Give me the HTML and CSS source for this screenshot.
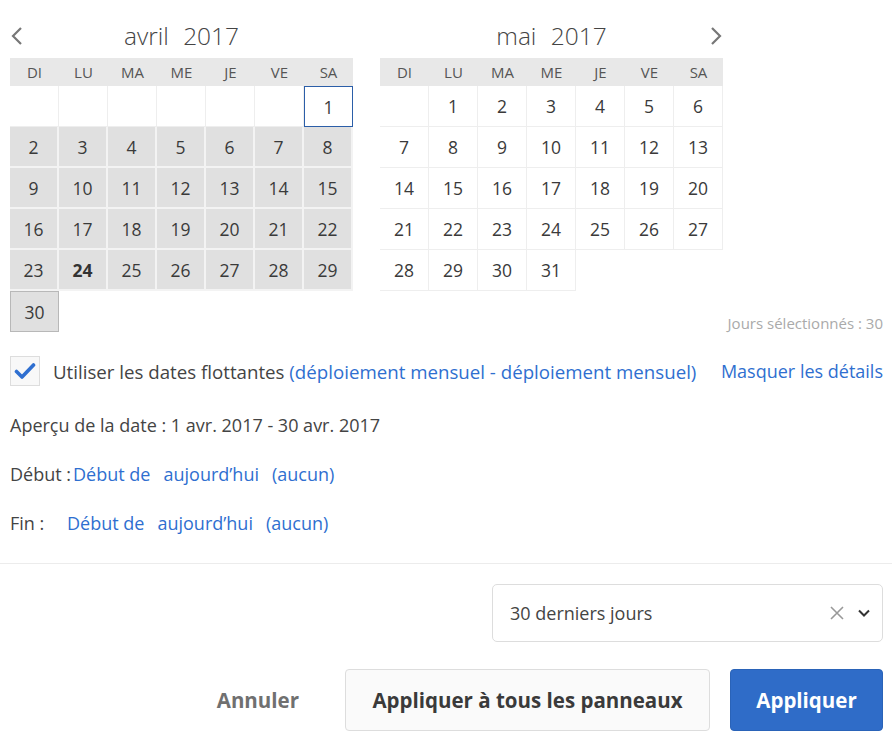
FILE: index.html
```html
<!DOCTYPE html>
<html lang="fr">
<head>
<meta charset="utf-8">
<link rel="stylesheet" href="styles.css">
</head>
<body>
<div class="page">
  <div class="cal-row">
    <div class="cal">
      <div class="cal-title">
        <span class="nav nav-left"><svg width="14" height="20" viewBox="0 0 14 20"><path d="M11 2 L3 10 L11 18" fill="none" stroke="#777" stroke-width="2.2"/></svg></span>
        <span class="month">avril <span class="yr">2017</span></span>
        <span class="nav"></span>
      </div>
      <div class="grid">
        <div class="dow">DI</div><div class="dow">LU</div><div class="dow">MA</div><div class="dow">ME</div><div class="dow">JE</div><div class="dow">VE</div><div class="dow">SA</div>
        <div class="d"></div><div class="d"></div><div class="d"></div><div class="d"></div><div class="d"></div><div class="d"></div><div class="d start">1</div>
        <div class="d in">2</div><div class="d in">3</div><div class="d in">4</div><div class="d in">5</div><div class="d in">6</div><div class="d in">7</div><div class="d in">8</div>
        <div class="d in">9</div><div class="d in">10</div><div class="d in">11</div><div class="d in">12</div><div class="d in">13</div><div class="d in">14</div><div class="d in">15</div>
        <div class="d in">16</div><div class="d in">17</div><div class="d in">18</div><div class="d in">19</div><div class="d in">20</div><div class="d in">21</div><div class="d in">22</div>
        <div class="d in">23</div><div class="d in today">24</div><div class="d in">25</div><div class="d in">26</div><div class="d in">27</div><div class="d in">28</div><div class="d in">29</div>
        <div class="d in end">30</div>
      </div>
    </div>
    <div class="right-col">
      <div class="cal">
        <div class="cal-title">
          <span class="nav"></span>
          <span class="month">mai <span class="yr">2017</span></span>
          <span class="nav nav-right"><svg width="14" height="20" viewBox="0 0 14 20"><path d="M3 2 L11 10 L3 18" fill="none" stroke="#777" stroke-width="2.2"/></svg></span>
        </div>
        <div class="grid">
          <div class="dow">DI</div><div class="dow">LU</div><div class="dow">MA</div><div class="dow">ME</div><div class="dow">JE</div><div class="dow">VE</div><div class="dow">SA</div>
          <div class="d"></div><div class="d">1</div><div class="d">2</div><div class="d">3</div><div class="d">4</div><div class="d">5</div><div class="d">6</div>
          <div class="d">7</div><div class="d">8</div><div class="d">9</div><div class="d">10</div><div class="d">11</div><div class="d">12</div><div class="d">13</div>
          <div class="d">14</div><div class="d">15</div><div class="d">16</div><div class="d">17</div><div class="d">18</div><div class="d">19</div><div class="d">20</div>
          <div class="d">21</div><div class="d">22</div><div class="d">23</div><div class="d">24</div><div class="d">25</div><div class="d">26</div><div class="d">27</div>
          <div class="d">28</div><div class="d">29</div><div class="d">30</div><div class="d">31</div>
        </div>
      </div>
      <div class="count">Jours sélectionnés : 30</div>
    </div>
  </div>

  <div class="opt-row">
    <span class="checkbox"><svg width="22" height="18" viewBox="0 0 22 18"><path d="M2.5 9.5 L8 15 L19.5 3" fill="none" stroke="#2f6fd0" stroke-width="3.6" stroke-linecap="round" stroke-linejoin="round"/></svg></span>
    <span class="opt-label">Utiliser les dates flottantes <a class="link">(déploiement mensuel - déploiement mensuel)</a></span>
    <a class="link hide">Masquer les détails</a>
  </div>

  <div class="line first">Aperçu de la date : 1 avr. 2017 - 30 avr. 2017</div>
  <div class="line"><span class="lbl-debut">Début :</span><a class="link"><span>Début de</span><span class="gap">aujourd’hui</span><span class="gap">(aucun)</span></a></div>
  <div class="line"><span class="lbl-fin">Fin :</span><a class="link"><span>Début de</span><span class="gap">aujourd’hui</span><span class="gap">(aucun)</span></a></div>

  <div class="divider"></div>

  <div class="preset-row">
    <div class="select">
      <span class="select-text">30 derniers jours</span>
      <svg class="clear" width="16" height="16" viewBox="0 0 16 16"><path d="M2 2 L14 14 M14 2 L2 14" stroke="#999" stroke-width="1.6"/></svg>
      <svg class="caret" width="14" height="10" viewBox="0 0 14 10"><path d="M2 2.5 L7 7.5 L12 2.5" fill="none" stroke="#333" stroke-width="2"/></svg>
    </div>
  </div>

  <div class="btn-row">
    <button class="btn btn-quiet">Annuler</button>
    <button class="btn btn-secondary">Appliquer à tous les panneaux</button>
    <button class="btn btn-primary">Appliquer</button>
  </div>
</div>
</body>
</html>
```
FILE: styles.css
```css
* { box-sizing: border-box; }
html, body { margin: 0; padding: 0; background: #fff; }
body {
  font-family: "Open Sans", "Noto Sans", sans-serif;
  color: #4b4b4b;
  width: 892px;
  height: 750px;
  overflow: hidden;
}
.page { padding: 0 9px 0 10px; }

.cal-row { display: flex; gap: 27px; }
.cal { width: 343px; }
.right-col {
  flex: 1;
  display: flex;
  flex-direction: column;
  justify-content: space-between;
}
.count {
  text-align: right;
  font-size: 15px;
  color: #aaa;
  line-height: 18px;
}

.cal-title {
  height: 58px;
  display: grid;
  grid-template-columns: 30px 1fr 30px;
  align-items: center;
  padding-top: 14px;
}
.month {
  text-align: center;
  font-size: 24.5px;
  font-weight: 300;
  color: #444;
  line-height: 30px;
}
.yr { margin-left: 8px; }
.nav { display: flex; align-items: center; height: 30px; }
.nav-right { justify-content: flex-end; }
.nav svg { display: block; }

.grid {
  display: grid;
  grid-template-columns: repeat(7, 49px);
}
.dow {
  height: 28px;
  background: #e8e8e8;
  font-size: 15px;
  color: #555;
  display: flex;
  align-items: center;
  justify-content: center;
}
.d {
  height: 41px;
  border-right: 1px solid #eee;
  border-bottom: 1px solid #eee;
  font-size: 17.5px;
  color: #3a3a3a;
  display: flex;
  align-items: center;
  justify-content: center;
}
.d.in {
  background: #e0e0e0;
  border-right: 2px solid #f3f3f3;
  border-bottom: 2px solid #f3f3f3;
}
.d.today { font-weight: 700; color: #333; }
.d.start { border: 1px solid #2b5ea8; }
.d.end { border: 1px solid #b8b8b8; }

.opt-row {
  margin-top: 24px;
  display: flex;
  align-items: center;
  height: 30px;
  font-size: 18.7px;
}
.checkbox {
  width: 30px;
  height: 30px;
  border: 1px solid #ddd;
  background: #f8f8f8;
  display: flex;
  align-items: center;
  justify-content: center;
  margin-right: 13px;
}
.checkbox svg { display: block; }
.opt-label { color: #444; }
.link { color: #2f6fd0; text-decoration: none; }
.hide { margin-left: auto; font-size: 18px; }

.line {
  font-size: 18px;
  color: #444;
  height: 24px;
  line-height: 24px;
  margin-top: 25px;
}
.line.first { margin-top: 27px; }
.lbl-debut { margin-right: 2px; }
.lbl-fin { display: inline-block; width: 57px; }
.gap { margin-left: 13px; }

.divider {
  height: 1px;
  background: #ececec;
  margin: 28px -9px 0 -10px;
}

.preset-row {
  display: flex;
  justify-content: flex-end;
  margin-top: 20px;
}
.select {
  width: 391px;
  height: 58px;
  border: 1px solid #ddd;
  border-radius: 5px;
  display: flex;
  align-items: center;
  padding: 0 11px 0 17px;
}
.select-text { font-size: 18px; color: #444; flex: 1; }
.clear { margin-right: 12px; }

.btn-row {
  display: flex;
  justify-content: flex-end;
  gap: 20px;
  margin-top: 27px;
}
.btn {
  font-family: "Open Sans", "Noto Sans", sans-serif;
  font-size: 20.5px;
  font-weight: 700;
  height: 62px;
  border-radius: 4px;
  cursor: pointer;
}
.btn-quiet {
  background: transparent;
  border: none;
  color: #707070;
  padding: 0 26px;
}
.btn-secondary {
  width: 365px;
  background: #fafafa;
  border: 1px solid #ddd;
  color: #3a3a3a;
}
.btn-primary {
  width: 153px;
  background: #2f6cc8;
  border: 1px solid #2a63b8;
  color: #fff;
}
```
